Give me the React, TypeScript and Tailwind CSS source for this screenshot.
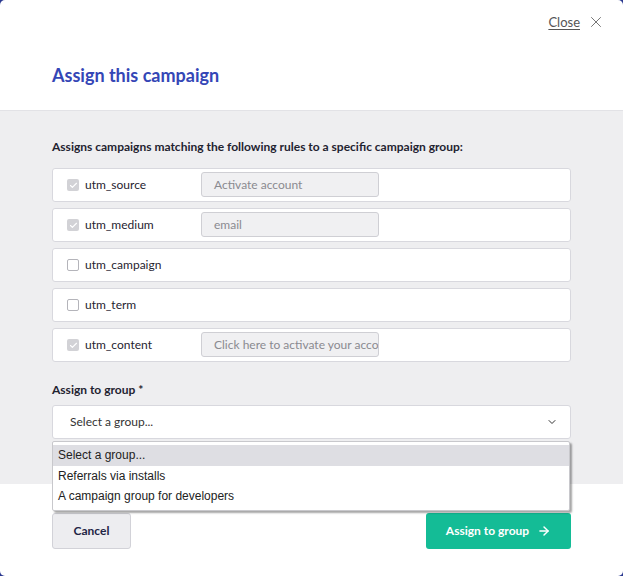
import { ChevronDown, ArrowRight, X, Check } from "lucide-react";

const rules = [
  { name: "utm_source", checked: true, value: "Activate account" },
  { name: "utm_medium", checked: true, value: "email" },
  { name: "utm_campaign", checked: false, value: null },
  { name: "utm_term", checked: false, value: null },
  { name: "utm_content", checked: true, value: "Click here to activate your account" },
];

const groups = ["Select a group...", "Referrals via installs", "A campaign group for developers"];

const App = () => {
  return (
    <div className="h-[576px] w-[623px] bg-[#2b3990] font-['Lato',sans-serif]">
      <div className="relative flex h-full flex-col overflow-hidden rounded-[5px] bg-white">
        <header className="h-[111px] border-b border-[#e2e2e6] px-[52px]">
          <div className="-mr-[34px] flex items-center justify-end gap-[7px] pt-[13px]">
            <span className="text-[13px] leading-[18px] text-[#555] underline underline-offset-2">Close</span>
            <X className="h-[18px] w-[18px] text-[#666]" strokeWidth={1.2} />
          </div>
          <h1 className="mt-[32px] text-[18px] leading-[24px] font-bold text-[#3446b6]">
            Assign this campaign
          </h1>
        </header>

        <section className="flex-1 bg-[#eeeef0] px-[52px] pt-[28px]">
          <p className="text-[12px] leading-[16px] font-bold text-[#1f2330]">
            Assigns campaigns matching the following rules to a specific campaign group:
          </p>

          <div className="mt-[13px] flex flex-col gap-[6px]">
            {rules.map((rule) => (
              <div
                key={rule.name}
                className="flex h-[34px] items-center rounded-[3px] border border-[#d8d8de] bg-white pl-[14px]"
              >
                {rule.checked ? (
                  <span className="flex h-[12px] w-[12px] items-center justify-center rounded-[2px] bg-[#d2d2d6]">
                    <Check className="h-[9px] w-[9px] text-white" strokeWidth={3} />
                  </span>
                ) : (
                  <span className="h-[12px] w-[12px] rounded-[2px] border border-[#b4b4ba] bg-white" />
                )}
                <span className="ml-[6px] w-[116px] text-[12px] text-[#1f2330]">{rule.name}</span>
                {rule.value && (
                  <div className="-mt-[2px] h-[25px] w-[178px] overflow-hidden whitespace-nowrap rounded-[3px] border border-[#cfcfd4] bg-[#f0f0f2] pl-[12px] pr-[2px] text-[12px] leading-[23px] text-[#8a8a90]">
                    {rule.value}
                  </div>
                )}
              </div>
            ))}
          </div>

          <p className="mt-[20px] text-[12px] leading-[16px] font-bold text-[#1f2330]">Assign to group *</p>

          <div className="mt-[7px] flex h-[34px] items-center justify-between rounded-[3px] border border-[#d8d8de] bg-white pl-[17px] pr-[12px]">
            <span className="text-[12px] text-[#333]">Select a group...</span>
            <ChevronDown className="h-[12px] w-[12px] text-[#333]" strokeWidth={2} />
          </div>
        </section>

        <footer className="flex h-[92px] items-start justify-between px-[52px] pt-[29px]">
          <button className="h-[36px] w-[79px] rounded-[3px] border border-[#d2d2d8] bg-[#ededf0] text-[12px] font-bold text-[#1f2545]">
            Cancel
          </button>
          <button className="flex h-[36px] w-[145px] items-center justify-center gap-[8px] rounded-[3px] bg-[#14bc96] text-[12px] font-bold text-white">
            Assign to group
            <ArrowRight className="h-[14px] w-[14px]" strokeWidth={2.5} />
          </button>
        </footer>

        <ul className="absolute left-[52px] top-[441px] w-[518px] rounded-[2px] border border-[#c8c8cc] bg-white py-[3px] font-['Liberation_Sans',Arial,sans-serif] text-[12px] text-[#222] shadow-[2px_2px_2px_rgba(0,0,0,0.35)]">
          {groups.map((g, i) => (
            <li
              key={g}
              className={`h-[20.5px] pl-[5px] leading-[20px] ${i === 0 ? "bg-[#dedee3]" : ""}`}
            >
              {g}
            </li>
          ))}
        </ul>
      </div>
    </div>
  );
};

export default App;
